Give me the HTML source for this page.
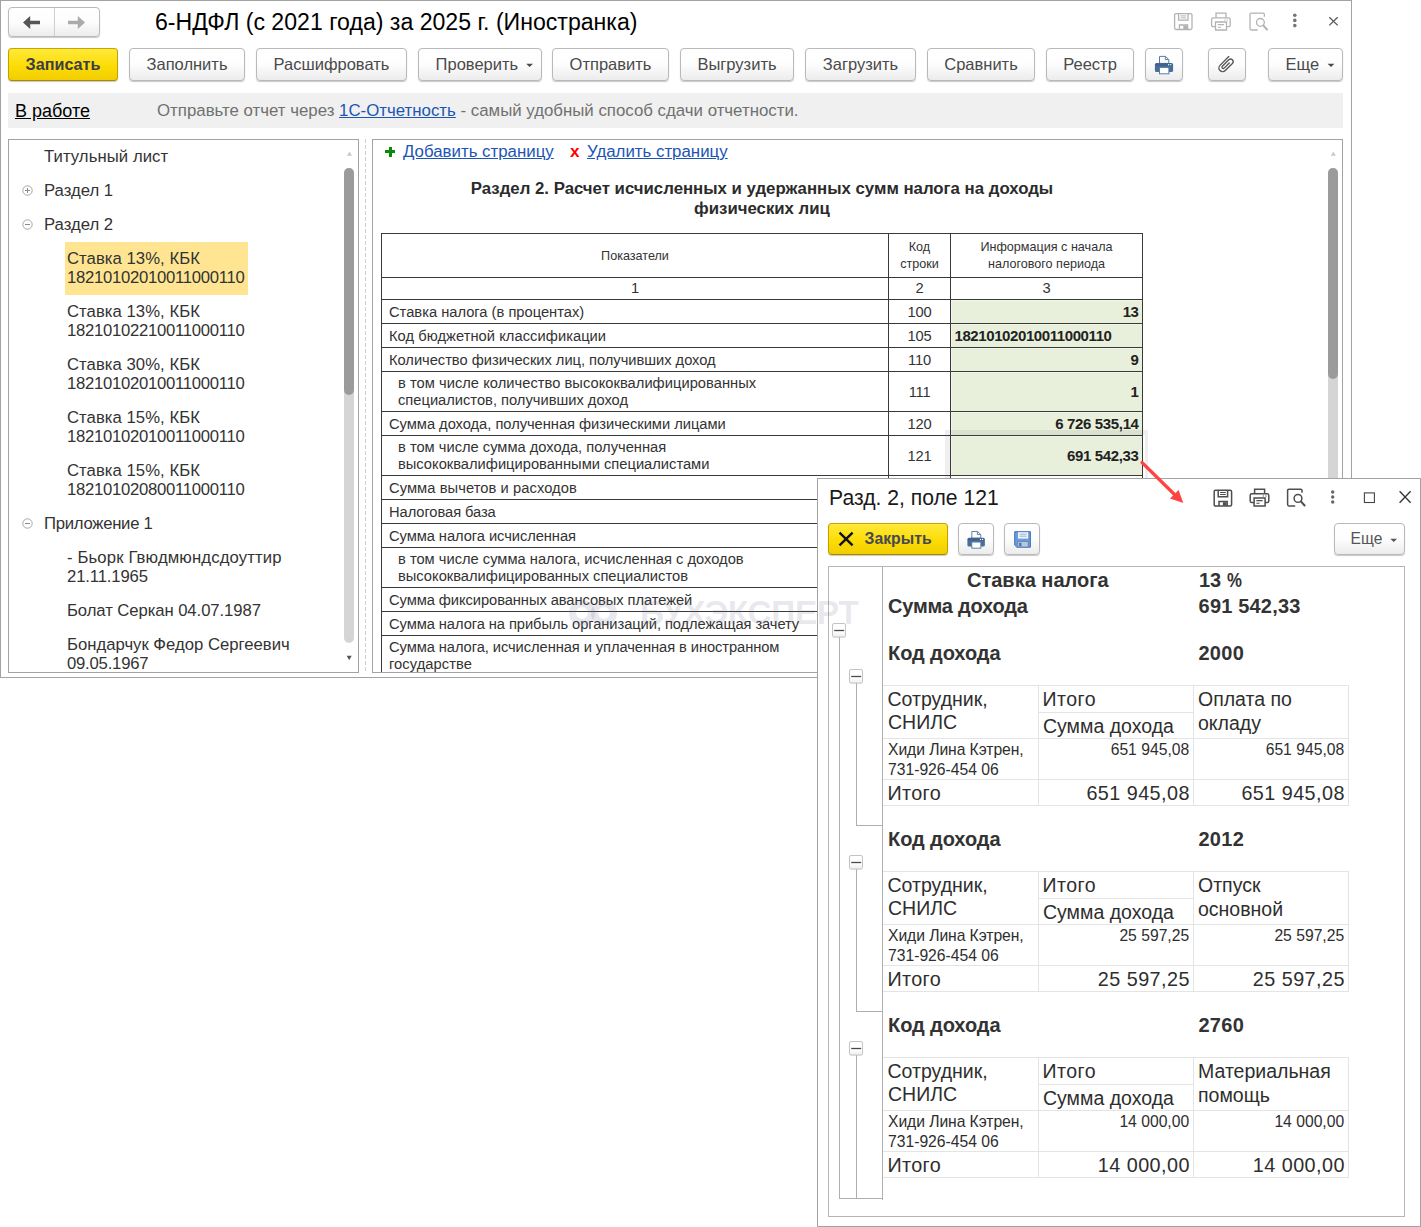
<!DOCTYPE html>
<html lang="ru"><head><meta charset="utf-8"><title>6-НДФЛ</title><style>
*{box-sizing:border-box;margin:0;padding:0}
html,body{width:1421px;height:1227px;overflow:hidden;background:#fff}
body{font-family:"Liberation Sans",sans-serif;font-size:16.5px;color:#333;position:relative}
.a{position:absolute}
.t{position:absolute;white-space:nowrap}
.clip{position:absolute;overflow:hidden}
.btn{position:absolute;border:1px solid #b9b9b9;border-radius:4px;background:linear-gradient(#ffffff 0%,#fdfdfd 50%,#ececec 100%);box-shadow:0 1px 1px rgba(0,0,0,.22)}
.btn.y{background:linear-gradient(#ffe93a 0%,#fcdc05 55%,#f2cd00 100%);border-color:#c4a600 #bfa100 #a58a00 #bfa100}
a.l{color:#1c55b5;text-decoration:underline}
svg{position:absolute;overflow:visible}
</style></head><body>
<!-- main window frame -->
<div class="a" style="left:0px;top:0px;width:1352px;height:678px;background:#fff;border:1px solid #a3a3a3;"></div>
<div class="btn" style="left:8px;top:7px;width:92px;height:30px"></div>
<div class="a" style="left:54px;top:8px;width:1px;height:28px;background:#cfcfcf;"></div>
<svg style="left:0;top:0" width="110" height="40"><path d="M23 22.5 L30.2 16 L30.2 20.8 L40 20.8 L40 24.2 L30.2 24.2 L30.2 29 Z" fill="#555"/><path d="M85 22.5 L77.8 16 L77.8 20.8 L68 20.8 L68 24.2 L77.8 24.2 L77.8 29 Z" fill="#ababab"/></svg>
<div class="t" style="left:155px;top:8.00px;font-size:23.1px;line-height:28px;color:#000;">6-НДФЛ (с 2021 года) за 2025 г. (Иностранка)</div>
<!--ICONS_TOP-->
<div class="btn y" style="left:8px;top:48px;width:110px;height:33px"></div>
<div class="btn" style="left:129px;top:48px;width:116px;height:33px"></div>
<div class="btn" style="left:256px;top:48px;width:151px;height:33px"></div>
<div class="btn" style="left:418px;top:48px;width:124px;height:33px"></div>
<div class="btn" style="left:552px;top:48px;width:117px;height:33px"></div>
<div class="btn" style="left:680px;top:48px;width:114px;height:33px"></div>
<div class="btn" style="left:805px;top:48px;width:111px;height:33px"></div>
<div class="btn" style="left:927px;top:48px;width:108px;height:33px"></div>
<div class="btn" style="left:1046px;top:48px;width:88px;height:33px"></div>
<div class="btn" style="left:1145px;top:48px;width:38px;height:33px"></div>
<div class="btn" style="left:1208px;top:48px;width:38px;height:33px"></div>
<div class="btn" style="left:1268px;top:48px;width:75px;height:33px"></div>
<div class="t" style="left:8px;top:54.39px;font-size:16.2px;line-height:20px;color:#3d3d47;font-weight:bold;width:110px;text-align:center;">Записать</div>
<div class="t" style="left:129px;top:54.28px;font-size:16.5px;line-height:20px;color:#4a4a4a;width:116px;text-align:center;">Заполнить</div>
<div class="t" style="left:256px;top:54.28px;font-size:16.5px;line-height:20px;color:#4a4a4a;width:151px;text-align:center;">Расшифровать</div>
<div class="t" style="left:435.6px;top:54.28px;font-size:16.5px;line-height:20px;color:#4a4a4a;">Проверить</div>
<div class="t" style="left:552px;top:54.28px;font-size:16.5px;line-height:20px;color:#4a4a4a;width:117px;text-align:center;">Отправить</div>
<div class="t" style="left:680px;top:54.28px;font-size:16.5px;line-height:20px;color:#4a4a4a;width:114px;text-align:center;">Выгрузить</div>
<div class="t" style="left:805px;top:54.28px;font-size:16.5px;line-height:20px;color:#4a4a4a;width:111px;text-align:center;">Загрузить</div>
<div class="t" style="left:927px;top:54.28px;font-size:16.5px;line-height:20px;color:#4a4a4a;width:108px;text-align:center;">Сравнить</div>
<div class="t" style="left:1046px;top:54.28px;font-size:16.5px;line-height:20px;color:#4a4a4a;width:88px;text-align:center;">Реестр</div>
<div class="t" style="left:1285.6px;top:54.28px;font-size:16.5px;line-height:20px;color:#4a4a4a;">Еще</div>
<svg style="left:0;top:0" width="1" height="1"><path d="M526.2 63.7 L533.0 63.7 L529.6 67.10000000000001 Z" fill="#4a4a4a"/></svg>
<svg style="left:0;top:0" width="1" height="1"><path d="M1327.6 63.7 L1334.4 63.7 L1331 67.10000000000001 Z" fill="#4a4a4a"/></svg>
<svg style="left:0;top:0" width="1421" height="60">
<g transform="translate(1174,13)" fill="none" stroke="#b3b3b3" stroke-width="1.3"><path d="M2 0.6 H16.5 Q18 0.6 18 2.1 V15 Q18 16.5 16.5 16.5 H2 Q0.6 16.5 0.6 15 V2.1 Q0.6 0.6 2 0.6 Z"/><path d="M4.6 0.6 V7.2 H14 V0.6"/><path d="M6.5 2.9 H12.2 M6.5 4.9 H12.2" stroke-width="1"/><path d="M5.4 16.5 V12 H13.6 V16.5"/><rect x="9.3" y="12.6" width="3.7" height="3.5" fill="#b3b3b3" stroke="none"/></g>
<g transform="translate(1211,12.6)" fill="none" stroke="#b3b3b3" stroke-width="1.3"><path d="M5 5.2 V0.6 H15 V5.2"/><path d="M4.5 14 H2.2 Q0.6 14 0.6 12.4 V6.8 Q0.6 5.2 2.2 5.2 H17.6 Q19.2 5.2 19.2 6.8 V12.4 Q19.2 14 17.6 14 H15.5"/><path d="M4.5 9.4 H15.5 V17.4 H4.5 Z"/><path d="M6.8 12 H13 M6.8 14.6 H10" stroke-width="1.1"/><path d="M13.2 7.4 H14.4 M15.8 7.4 H17" stroke-width="1.1"/></g>
<g transform="translate(1249.4,12.6)" fill="none" stroke="#b3b3b3" stroke-width="1.3"><path d="M15 4.2 V2 Q15 0.6 13.6 0.6 H2 Q0.6 0.6 0.6 2 V16 Q0.6 17.4 2 17.4 H8.2"/><circle cx="11" cy="9.8" r="3.9"/><path d="M13.9 12.8 L17.6 16.9" stroke-width="2" stroke-linecap="round"/></g>
<circle cx="1294.8" cy="15.3" r="1.8" fill="#757575"/><circle cx="1294.8" cy="20.4" r="1.8" fill="#757575"/><circle cx="1294.8" cy="25.6" r="1.8" fill="#757575"/>
<path d="M1329.3 17.2 L1337.7 25.4 M1337.7 17.2 L1329.3 25.4" stroke="#585858" stroke-width="1.3" fill="none"/>
<g transform="translate(1154.9,63)"><path d="M4.6 0.4 V-6.6 H10.6 L13.9 -3.4 V0.4 Z" fill="#fff" stroke="#5b7ba6" stroke-width="1"/><path d="M10.4 -6.4 V-3.4 H13.7" fill="none" stroke="#5b7ba6" stroke-width="1"/><rect x="0" y="0" width="18.2" height="9" rx="1.6" fill="#4a6d99"/><rect x="0.6" y="0.5" width="17" height="2.4" rx="1" fill="#3f628f"/><rect x="4.6" y="4.4" width="9.4" height="6.4" fill="#fff" stroke="#5b7ba6" stroke-width="1"/><rect x="13.1" y="1.1" width="1.2" height="1.2" fill="#fff"/><rect x="15.2" y="1.1" width="1.2" height="1.2" fill="#fff"/></g>
<g transform="translate(1226.3,64.3) rotate(45)" fill="none" stroke="#555" stroke-width="1.35" stroke-linecap="round"><path d="M-3.7 -7.2 L-3.7 5.2 A3.7 3.7 0 0 0 3.7 5.2 L3.7 -4.9 A2.55 2.55 0 0 0 -1.4 -4.9 L-1.4 4.2 A1.3 1.3 0 0 0 1.2 4.2 L1.2 -3.0"/></g>
</svg>
<div class="a" style="left:8px;top:93px;width:1335px;height:35px;background:#f0f0f0;"></div>
<div class="t" style="left:15px;top:100.26px;font-size:18px;line-height:22px;color:#000;"><span style="text-decoration:underline">В работе</span></div>
<div class="t" style="left:157px;top:101.17px;font-size:16.83px;line-height:20px;color:#707070;">Отправьте отчет через <a class="l">1С-Отчетность</a> - самый удобный способ сдачи отчетности.</div>
<div class="a" style="left:8px;top:139px;width:351px;height:534px;background:#fff;border:1px solid #a3a3a3;"></div>
<div class="clip" style="left:9px;top:140px;width:349px;height:532px">
<div class="a" style="left:56px;top:102px;width:183px;height:53px;background:#ffe591;"></div>
<div class="t" style="left:35px;top:6.71px;font-size:16.7px;line-height:19px;color:#333;letter-spacing:0.07px;">Титульный лист</div>
<div class="t" style="left:35px;top:40.71px;font-size:16.7px;line-height:19px;color:#333;">Раздел 1</div>
<div class="t" style="left:35px;top:74.71px;font-size:16.7px;line-height:19px;color:#333;">Раздел 2</div>
<div class="t" style="left:58px;top:108.71px;font-size:16.7px;line-height:19px;color:#333;letter-spacing:0.04px;">Ставка 13%, КБК</div>
<div class="t" style="left:58px;top:127.71px;font-size:16.7px;line-height:19px;color:#333;letter-spacing:-0.28px;">18210102010011000110</div>
<div class="t" style="left:58px;top:161.71px;font-size:16.7px;line-height:19px;color:#333;letter-spacing:0.04px;">Ставка 13%, КБК</div>
<div class="t" style="left:58px;top:180.71px;font-size:16.7px;line-height:19px;color:#333;letter-spacing:-0.28px;">18210102210011000110</div>
<div class="t" style="left:58px;top:214.71px;font-size:16.7px;line-height:19px;color:#333;letter-spacing:0.04px;">Ставка 30%, КБК</div>
<div class="t" style="left:58px;top:233.71px;font-size:16.7px;line-height:19px;color:#333;letter-spacing:-0.28px;">18210102010011000110</div>
<div class="t" style="left:58px;top:267.71px;font-size:16.7px;line-height:19px;color:#333;letter-spacing:0.04px;">Ставка 15%, КБК</div>
<div class="t" style="left:58px;top:286.71px;font-size:16.7px;line-height:19px;color:#333;letter-spacing:-0.28px;">18210102010011000110</div>
<div class="t" style="left:58px;top:320.71px;font-size:16.7px;line-height:19px;color:#333;letter-spacing:0.04px;">Ставка 15%, КБК</div>
<div class="t" style="left:58px;top:339.71px;font-size:16.7px;line-height:19px;color:#333;letter-spacing:-0.28px;">18210102080011000110</div>
<div class="t" style="left:35px;top:373.71px;font-size:16.7px;line-height:19px;color:#333;letter-spacing:-0.27px;">Приложение 1</div>
<div class="t" style="left:58px;top:407.71px;font-size:16.7px;line-height:19px;color:#333;letter-spacing:0.13px;">- Бьорк Гвюдмюндсдоуттир</div>
<div class="t" style="left:58px;top:426.71px;font-size:16.7px;line-height:19px;color:#333;letter-spacing:-0.14px;">21.11.1965</div>
<div class="t" style="left:58px;top:460.71px;font-size:16.7px;line-height:19px;color:#333;letter-spacing:-0.08px;">Болат Серкан 04.07.1987</div>
<div class="t" style="left:58px;top:494.71px;font-size:16.7px;line-height:19px;color:#333;">Бондарчук Федор Сергеевич</div>
<div class="t" style="left:58px;top:513.71px;font-size:16.7px;line-height:19px;color:#333;letter-spacing:-0.22px;">09.05.1967</div>
<svg style="left:0;top:0" width="60" height="540">
<circle cx="18.5" cy="50.5" r="4.7" fill="#fff" stroke="#a6a6a6" stroke-width="1"/>
<path d="M16.0 50.5 H21.0" stroke="#8a8a8a" stroke-width="1"/>
<path d="M18.5 48.0 V53.0" stroke="#8a8a8a" stroke-width="1"/>
<circle cx="18.5" cy="84.5" r="4.7" fill="#fff" stroke="#a6a6a6" stroke-width="1"/>
<path d="M16.0 84.5 H21.0" stroke="#8a8a8a" stroke-width="1"/>
<circle cx="18.5" cy="383.5" r="4.7" fill="#fff" stroke="#a6a6a6" stroke-width="1"/>
<path d="M16.0 383.5 H21.0" stroke="#8a8a8a" stroke-width="1"/>
<path d="M337.9 15.800000000000011 L343.1 15.800000000000011 L340.5 11.400000000000006 Z" fill="#c9c9c9"/>
<path d="M337.7 515.8 L342.7 515.8 L340.2 520.3 Z" fill="#555"/>
</svg>
<div class="a" style="left:335px;top:28px;width:10px;height:475px;background:#d5d5d5;border-radius:5px;"></div>
<div class="a" style="left:335px;top:28px;width:10px;height:227px;background:#9b9b9b;border-radius:5px;"></div>
</div>
<div class="a" style="left:365px;top:139px;width:1px;height:534px;background:repeating-linear-gradient(to bottom,#cfcfcf 0,#cfcfcf 4px,transparent 4px,transparent 6px);"></div>
<div class="a" style="left:372px;top:139px;width:971px;height:534px;background:#fff;border:1px solid #a3a3a3;"></div>
<div class="clip" style="left:373px;top:140px;width:969px;height:532px">
<div class="a" style="left:12px;top:10px;width:10px;height:3px;background:#0a8a0a;"></div>
<div class="a" style="left:15.5px;top:6.5px;width:3px;height:10px;background:#0a8a0a;"></div>
<div class="t" style="left:30px;top:2.16px;font-size:16.85px;line-height:20px;color:#333;"><a class="l">Добавить страницу</a></div>
<div class="t" style="left:197px;top:1.04px;font-size:17.2px;line-height:20px;color:#f00;font-weight:bold;">x</div>
<div class="t" style="left:214px;top:2.16px;font-size:16.85px;line-height:20px;color:#333;"><a class="l">Удалить страницу</a></div>
<div class="t" style="left:8px;top:39.18px;font-size:16.8px;line-height:20px;color:#2b2b2b;font-weight:bold;width:762px;text-align:center;">Раздел 2. Расчет исчисленных и удержанных сумм налога на доходы<br>физических лиц</div>
<div class="a" style="left:578px;top:160px;width:191px;height:23px;background:#f1f6ea;"></div>
<div class="a" style="left:579px;top:161px;width:190px;height:22px;background:#e8f0dc;"></div>
<div class="a" style="left:578px;top:184px;width:191px;height:23px;background:#f1f6ea;"></div>
<div class="a" style="left:579px;top:185px;width:190px;height:22px;background:#e8f0dc;"></div>
<div class="a" style="left:578px;top:208px;width:191px;height:23px;background:#f1f6ea;"></div>
<div class="a" style="left:579px;top:209px;width:190px;height:22px;background:#e8f0dc;"></div>
<div class="a" style="left:578px;top:232px;width:191px;height:39px;background:#f1f6ea;"></div>
<div class="a" style="left:579px;top:233px;width:190px;height:38px;background:#e8f0dc;"></div>
<div class="a" style="left:578px;top:272px;width:191px;height:23px;background:#f1f6ea;"></div>
<div class="a" style="left:579px;top:273px;width:190px;height:22px;background:#e8f0dc;"></div>
<div class="a" style="left:578px;top:296px;width:191px;height:39px;background:#f1f6ea;"></div>
<div class="a" style="left:579px;top:297px;width:190px;height:38px;background:#e8f0dc;"></div>
<div class="a" style="left:572px;top:290px;width:5px;height:50px;background:rgba(110,110,110,.11);"></div>
<div class="a" style="left:577px;top:290px;width:198px;height:5px;background:rgba(110,110,110,.11);"></div>
<div class="a" style="left:772px;top:295px;width:3px;height:45px;background:rgba(110,110,110,.11);"></div>
<div class="a" style="left:8px;top:93px;width:762px;height:1px;background:#3a3a3a;"></div>
<div class="a" style="left:8px;top:137px;width:762px;height:1px;background:#3a3a3a;"></div>
<div class="a" style="left:8px;top:159px;width:762px;height:1px;background:#3a3a3a;"></div>
<div class="a" style="left:8px;top:183px;width:762px;height:1px;background:#3a3a3a;"></div>
<div class="a" style="left:8px;top:207px;width:762px;height:1px;background:#3a3a3a;"></div>
<div class="a" style="left:8px;top:231px;width:762px;height:1px;background:#3a3a3a;"></div>
<div class="a" style="left:8px;top:271px;width:762px;height:1px;background:#3a3a3a;"></div>
<div class="a" style="left:8px;top:295px;width:762px;height:1px;background:#3a3a3a;"></div>
<div class="a" style="left:8px;top:335px;width:762px;height:1px;background:#3a3a3a;"></div>
<div class="a" style="left:8px;top:359px;width:762px;height:1px;background:#3a3a3a;"></div>
<div class="a" style="left:8px;top:383px;width:762px;height:1px;background:#3a3a3a;"></div>
<div class="a" style="left:8px;top:407px;width:762px;height:1px;background:#3a3a3a;"></div>
<div class="a" style="left:8px;top:447px;width:762px;height:1px;background:#3a3a3a;"></div>
<div class="a" style="left:8px;top:471px;width:762px;height:1px;background:#3a3a3a;"></div>
<div class="a" style="left:8px;top:495px;width:762px;height:1px;background:#3a3a3a;"></div>
<div class="a" style="left:8px;top:535px;width:762px;height:1px;background:#3a3a3a;"></div>
<div class="a" style="left:8px;top:93px;width:1px;height:443px;background:#3a3a3a;"></div>
<div class="a" style="left:515px;top:93px;width:1px;height:443px;background:#3a3a3a;"></div>
<div class="a" style="left:577px;top:93px;width:1px;height:443px;background:#3a3a3a;"></div>
<div class="a" style="left:769px;top:93px;width:1px;height:443px;background:#3a3a3a;"></div>
<div class="t" style="left:8px;top:108.63px;font-size:12.6px;line-height:15px;color:#333;width:508px;text-align:center;">Показатели</div>
<div class="t" style="left:515px;top:99.13px;font-size:12.6px;line-height:17px;color:#333;width:63px;text-align:center;">Код<br>строки</div>
<div class="t" style="left:577px;top:99.13px;font-size:12.6px;line-height:17px;color:#333;width:193px;text-align:center;">Информация с начала<br>налогового периода</div>
<div class="t" style="left:8px;top:140.41px;font-size:14.7px;line-height:17px;color:#333;width:508px;text-align:center;">1</div>
<div class="t" style="left:515px;top:140.41px;font-size:14.7px;line-height:17px;color:#333;width:63px;text-align:center;">2</div>
<div class="t" style="left:577px;top:140.41px;font-size:14.7px;line-height:17px;color:#333;width:193px;text-align:center;">3</div>
<div class="t" style="left:16px;top:164.41px;font-size:14.7px;line-height:17px;color:#333;">Ставка налога (в процентах)</div>
<div class="t" style="left:515px;top:164.41px;font-size:14.7px;line-height:17px;color:#333;width:63px;text-align:center;letter-spacing:-0.2px;">100</div>
<div class="t" style="left:577px;top:162.90px;font-size:15px;line-height:17px;color:#222;font-weight:bold;width:188.6px;text-align:right;letter-spacing:-0.36px;">13</div>
<div class="t" style="left:16px;top:188.41px;font-size:14.7px;line-height:17px;color:#333;letter-spacing:0.05px;">Код бюджетной классификации</div>
<div class="t" style="left:515px;top:188.41px;font-size:14.7px;line-height:17px;color:#333;width:63px;text-align:center;letter-spacing:-0.2px;">105</div>
<div class="t" style="left:581.5px;top:186.90px;font-size:15px;line-height:17px;color:#222;font-weight:bold;letter-spacing:-0.41px;">18210102010011000110</div>
<div class="t" style="left:16px;top:212.41px;font-size:14.7px;line-height:17px;color:#333;letter-spacing:-0.025px;">Количество физических лиц, получивших доход</div>
<div class="t" style="left:515px;top:212.41px;font-size:14.7px;line-height:17px;color:#333;width:63px;text-align:center;letter-spacing:-0.2px;">110</div>
<div class="t" style="left:577px;top:210.90px;font-size:15px;line-height:17px;color:#222;font-weight:bold;width:188.6px;text-align:right;letter-spacing:-0.36px;">9</div>
<div class="t" style="left:25px;top:235.41px;font-size:14.7px;line-height:17px;color:#333;letter-spacing:0.03px;">в том числе количество высококвалифицированных</div>
<div class="t" style="left:25px;top:252.41px;font-size:14.7px;line-height:17px;color:#333;">специалистов, получивших доход</div>
<div class="t" style="left:515px;top:244.41px;font-size:14.7px;line-height:17px;color:#333;width:63px;text-align:center;letter-spacing:-0.2px;">111</div>
<div class="t" style="left:577px;top:242.90px;font-size:15px;line-height:17px;color:#222;font-weight:bold;width:188.6px;text-align:right;letter-spacing:-0.36px;">1</div>
<div class="t" style="left:16px;top:276.41px;font-size:14.7px;line-height:17px;color:#333;letter-spacing:-0.025px;">Сумма дохода, полученная физическими лицами</div>
<div class="t" style="left:515px;top:276.41px;font-size:14.7px;line-height:17px;color:#333;width:63px;text-align:center;letter-spacing:-0.2px;">120</div>
<div class="t" style="left:577px;top:274.90px;font-size:15px;line-height:17px;color:#222;font-weight:bold;width:188.6px;text-align:right;letter-spacing:-0.36px;">6 726 535,14</div>
<div class="t" style="left:25px;top:299.41px;font-size:14.7px;line-height:17px;color:#333;">в том числе сумма дохода, полученная</div>
<div class="t" style="left:25px;top:316.41px;font-size:14.7px;line-height:17px;color:#333;">высококвалифицированными специалистами</div>
<div class="t" style="left:515px;top:308.41px;font-size:14.7px;line-height:17px;color:#333;width:63px;text-align:center;letter-spacing:-0.2px;">121</div>
<div class="t" style="left:577px;top:306.90px;font-size:15px;line-height:17px;color:#222;font-weight:bold;width:188.6px;text-align:right;letter-spacing:-0.36px;">691 542,33</div>
<div class="t" style="left:16px;top:340.41px;font-size:14.7px;line-height:17px;color:#333;letter-spacing:0.075px;">Сумма вычетов и расходов</div>
<div class="t" style="left:16px;top:364.41px;font-size:14.7px;line-height:17px;color:#333;letter-spacing:-0.07px;">Налоговая база</div>
<div class="t" style="left:16px;top:388.41px;font-size:14.7px;line-height:17px;color:#333;letter-spacing:-0.06px;">Сумма налога исчисленная</div>
<div class="t" style="left:25px;top:411.41px;font-size:14.7px;line-height:17px;color:#333;">в том числе сумма налога, исчисленная с доходов</div>
<div class="t" style="left:25px;top:428.41px;font-size:14.7px;line-height:17px;color:#333;">высококвалифицированных специалистов</div>
<div class="t" style="left:16px;top:452.41px;font-size:14.7px;line-height:17px;color:#333;letter-spacing:-0.066px;">Сумма фиксированных авансовых платежей</div>
<div class="t" style="left:16px;top:476.41px;font-size:14.7px;line-height:17px;color:#333;letter-spacing:-0.067px;">Сумма налога на прибыль организаций, подлежащая зачету</div>
<div class="t" style="left:16px;top:499.41px;font-size:14.7px;line-height:17px;color:#333;letter-spacing:-0.07px;">Сумма налога, исчисленная и уплаченная в иностранном</div>
<div class="t" style="left:16px;top:516.41px;font-size:14.7px;line-height:17px;color:#333;letter-spacing:0.08px;">государстве</div>
<!--WM removed-->
<div class="a" style="left:955px;top:28px;width:10px;height:520px;background:#d5d5d5;border-radius:5px;"></div>
<div class="a" style="left:955px;top:28px;width:10px;height:211px;background:#9b9b9b;border-radius:5px;"></div>
<svg style="left:0;top:0" width="1" height="1"><path d="M957.7 15.8 L962.9 15.8 L960.3 11.4 Z" fill="#c9c9c9"/></svg>
</div>
<div class="a" style="left:817px;top:478px;width:604px;height:749px;background:#fff;border:1px solid #a3a3a3;"></div>
<div class="t" style="left:829px;top:484.67px;font-size:21.15px;line-height:26px;color:#1a1a1a;">Разд. 2, поле 121</div>
<div class="btn y" style="left:828px;top:523px;width:120px;height:32px"></div>
<div class="btn" style="left:958px;top:523px;width:36px;height:32px"></div>
<div class="btn" style="left:1004px;top:523px;width:36px;height:32px"></div>
<div class="btn" style="left:1334px;top:523px;width:71px;height:32px"></div>
<div class="t" style="left:864.6px;top:528.54px;font-size:15.75px;line-height:20px;color:#454955;font-weight:bold;">Закрыть</div>
<div class="t" style="left:1350.6px;top:528.59px;font-size:15.6px;line-height:20px;color:#555;">Еще</div>
<svg style="left:0;top:0" width="1421" height="560">
<g transform="translate(1213.6,489.6)" fill="none" stroke="#4e4e4e" stroke-width="1.5"><path d="M2 0.6 H16.5 Q18 0.6 18 2.1 V15 Q18 16.5 16.5 16.5 H2 Q0.6 16.5 0.6 15 V2.1 Q0.6 0.6 2 0.6 Z"/><path d="M4.6 0.6 V7.2 H14 V0.6"/><path d="M6.5 2.9 H12.2 M6.5 4.9 H12.2" stroke-width="1"/><path d="M5.4 16.5 V12 H13.6 V16.5"/><rect x="9.3" y="12.6" width="3.7" height="3.5" fill="#4e4e4e" stroke="none"/></g>
<g transform="translate(1249.6,488.6)" fill="none" stroke="#4e4e4e" stroke-width="1.5"><path d="M5 5.2 V0.6 H15 V5.2"/><path d="M4.5 14 H2.2 Q0.6 14 0.6 12.4 V6.8 Q0.6 5.2 2.2 5.2 H17.6 Q19.2 5.2 19.2 6.8 V12.4 Q19.2 14 17.6 14 H15.5"/><path d="M4.5 9.4 H15.5 V17.4 H4.5 Z"/><path d="M6.8 12 H13 M6.8 14.6 H10" stroke-width="1.1"/><path d="M13.2 7.4 H14.4 M15.8 7.4 H17" stroke-width="1.1"/></g>
<g transform="translate(1287,488.6)" fill="none" stroke="#4e4e4e" stroke-width="1.5"><path d="M15 4.2 V2 Q15 0.6 13.6 0.6 H2 Q0.6 0.6 0.6 2 V16 Q0.6 17.4 2 17.4 H8.2"/><circle cx="11" cy="9.8" r="3.9"/><path d="M13.9 12.8 L17.6 16.9" stroke-width="2" stroke-linecap="round"/></g>
<circle cx="1332.7" cy="492" r="1.7" fill="#666"/><circle cx="1332.7" cy="497" r="1.7" fill="#666"/><circle cx="1332.7" cy="502" r="1.7" fill="#666"/>
<rect x="1364.4" y="492.9" width="10" height="9.6" fill="none" stroke="#444" stroke-width="1.1"/>
<path d="M1399.6 491.3 L1410.6 502.8 M1410.6 491.3 L1399.6 502.8" stroke="#333" stroke-width="1.3" fill="none"/>
<path d="M839.5 532.6 L852.6 545.3 M852.6 532.6 L839.5 545.3" stroke="#111" stroke-width="2.4" fill="none"/>
<g transform="scale(0.96) translate(1007.7083333333334,560.2083333333333)"><path d="M4.6 0.4 V-6.6 H10.6 L13.9 -3.4 V0.4 Z" fill="#fff" stroke="#5b7ba6" stroke-width="1"/><path d="M10.4 -6.4 V-3.4 H13.7" fill="none" stroke="#5b7ba6" stroke-width="1"/><rect x="0" y="0" width="18.2" height="9" rx="1.6" fill="#4a6d99"/><rect x="0.6" y="0.5" width="17" height="2.4" rx="1" fill="#3f628f"/><rect x="4.6" y="4.4" width="9.4" height="6.4" fill="#fff" stroke="#5b7ba6" stroke-width="1"/><rect x="13.1" y="1.1" width="1.2" height="1.2" fill="#fff"/><rect x="15.2" y="1.1" width="1.2" height="1.2" fill="#fff"/></g>
<g transform="translate(1014.2,531.2)"><path d="M0.5 0.5 H16.2 V16 H2.6 L0.5 13.9 Z" fill="#6a9bd8" stroke="#3f73b5" stroke-width="1"/><rect x="3.8" y="1" width="10.2" height="6.4" fill="#eef3fa"/><path d="M5.4 3 H12.4 M5.4 5 H12.4" stroke="#9db6d6" stroke-width="1"/><rect x="3.6" y="10.4" width="10.4" height="5.4" fill="#b9c7d8" stroke="#5d83b5" stroke-width="0.8"/><rect x="5" y="11.6" width="2.2" height="3.6" fill="#3f73b5"/></g>
</svg>
<svg style="left:0;top:0" width="1" height="1"><path d="M1390.3 538.7 L1397.1000000000001 538.7 L1393.7 542.1 Z" fill="#555"/></svg>
<div class="a" style="left:828px;top:566px;width:577px;height:651px;background:#fff;border:1px solid #b5b5b5;"></div>
<div class="a" style="left:882px;top:567px;width:1px;height:633px;background:#b0b0b0;"></div>
<div class="a" style="left:839px;top:636px;width:1px;height:562px;background:#b0b0b0;"></div>
<div class="a" style="left:839px;top:1198px;width:44px;height:1px;background:#b0b0b0;"></div>
<svg style="left:0;top:0" width="1421" height="1227" shape-rendering="crispEdges">
<defs><linearGradient id="mbg" x1="0" y1="0" x2="0" y2="1"><stop offset="0" stop-color="#fff"/><stop offset="0.6" stop-color="#fff"/><stop offset="1" stop-color="#ececec"/></linearGradient></defs>
<rect x="832.5" y="623.5" width="13" height="13.6" rx="1.6" fill="url(#mbg)" stroke="#c2c2c2" stroke-width="1" shape-rendering="auto"/><path d="M834.2 630.5 H844.2" stroke="#4a4a4a" stroke-width="1.3" shape-rendering="auto"/>
<path d="M856.5 683 V825.5 H883" fill="none" stroke="#aeaeae" stroke-width="1"/>
<rect x="849.5" y="669.5" width="13" height="13.6" rx="1.6" fill="url(#mbg)" stroke="#c2c2c2" stroke-width="1" shape-rendering="auto"/><path d="M851.2 676.5 H861.2" stroke="#4a4a4a" stroke-width="1.3" shape-rendering="auto"/>
<path d="M856.5 869 V1011.5 H883" fill="none" stroke="#aeaeae" stroke-width="1"/>
<rect x="849.5" y="855.5" width="13" height="13.6" rx="1.6" fill="url(#mbg)" stroke="#c2c2c2" stroke-width="1" shape-rendering="auto"/><path d="M851.2 862.5 H861.2" stroke="#4a4a4a" stroke-width="1.3" shape-rendering="auto"/>
<path d="M856.5 1055 V1198.5 H883" fill="none" stroke="#aeaeae" stroke-width="1"/>
<rect x="849.5" y="1041.5" width="13" height="13.6" rx="1.6" fill="url(#mbg)" stroke="#c2c2c2" stroke-width="1" shape-rendering="auto"/><path d="M851.2 1048.5 H861.2" stroke="#4a4a4a" stroke-width="1.3" shape-rendering="auto"/>
</svg>
<div class="t" style="left:967px;top:568.07px;font-size:20px;line-height:24px;color:#333;font-weight:bold;">Ставка налога</div>
<div class="t" style="left:1199px;top:568.07px;font-size:20px;line-height:24px;color:#333;font-weight:bold;">13 <span style="display:inline-block;transform:scaleX(.84);transform-origin:0 0">%</span></div>
<div class="t" style="left:888px;top:594.07px;font-size:20px;line-height:24px;color:#333;font-weight:bold;letter-spacing:-0.2px;">Сумма дохода</div>
<div class="t" style="left:1198.6px;top:594.07px;font-size:20px;line-height:24px;color:#333;font-weight:bold;letter-spacing:0.18px;">691 542,33</div>
<div class="t" style="left:888px;top:641.07px;font-size:20px;line-height:24px;color:#333;font-weight:bold;letter-spacing:-0.08px;">Код дохода</div>
<div class="t" style="left:1198.4px;top:641.07px;font-size:20px;line-height:24px;color:#333;font-weight:bold;letter-spacing:0.3px;">2000</div>
<div class="a" style="left:883px;top:685px;width:466px;height:1px;background:#e4e4e4;"></div>
<div class="a" style="left:883px;top:738px;width:466px;height:1px;background:#e4e4e4;"></div>
<div class="a" style="left:883px;top:779px;width:466px;height:1px;background:#e4e4e4;"></div>
<div class="a" style="left:883px;top:805px;width:466px;height:1px;background:#e4e4e4;"></div>
<div class="a" style="left:1038px;top:712px;width:155px;height:1px;background:#e4e4e4;"></div>
<div class="a" style="left:1038px;top:686px;width:1px;height:120px;background:#e4e4e4;"></div>
<div class="a" style="left:1193px;top:686px;width:1px;height:120px;background:#e4e4e4;"></div>
<div class="a" style="left:1348px;top:686px;width:1px;height:120px;background:#e4e4e4;"></div>
<div class="t" style="left:887.5px;top:687.74px;font-size:19.5px;line-height:23px;color:#2e2e2e;">Сотрудник,</div>
<div class="t" style="left:888px;top:710.74px;font-size:19.5px;line-height:23px;color:#2e2e2e;">СНИЛС</div>
<div class="t" style="left:1042.4px;top:687.74px;font-size:19.5px;line-height:23px;color:#2e2e2e;letter-spacing:0.55px;">Итого</div>
<div class="t" style="left:1043px;top:714.74px;font-size:19.5px;line-height:23px;color:#2e2e2e;">Сумма дохода</div>
<div class="t" style="left:1198px;top:687.74px;font-size:19.5px;line-height:23px;color:#2e2e2e;">Оплата по</div>
<div class="t" style="left:1198px;top:711.74px;font-size:19.5px;line-height:23px;color:#2e2e2e;">окладу</div>
<div class="t" style="left:888px;top:740.06px;font-size:15.7px;line-height:19px;color:#2e2e2e;letter-spacing:-0.07px;">Хиди Лина Кэтрен,</div>
<div class="t" style="left:888px;top:760.06px;font-size:15.7px;line-height:19px;color:#2e2e2e;">731-926-454 06</div>
<div class="t" style="left:1038px;top:740.06px;font-size:15.7px;line-height:19px;color:#2e2e2e;width:151.2px;text-align:right;">651 945,08</div>
<div class="t" style="left:1193px;top:740.06px;font-size:15.7px;line-height:19px;color:#2e2e2e;width:151.2px;text-align:right;">651 945,08</div>
<div class="t" style="left:887.5px;top:781.64px;font-size:19.8px;line-height:23px;color:#2e2e2e;letter-spacing:0.35px;">Итого</div>
<div class="t" style="left:1038px;top:781.64px;font-size:19.8px;line-height:23px;color:#2e2e2e;width:151.9px;text-align:right;letter-spacing:0.45px;">651 945,08</div>
<div class="t" style="left:1193px;top:781.64px;font-size:19.8px;line-height:23px;color:#2e2e2e;width:151.9px;text-align:right;letter-spacing:0.45px;">651 945,08</div>
<div class="t" style="left:888px;top:827.07px;font-size:20px;line-height:24px;color:#333;font-weight:bold;letter-spacing:-0.08px;">Код дохода</div>
<div class="t" style="left:1198.4px;top:827.07px;font-size:20px;line-height:24px;color:#333;font-weight:bold;letter-spacing:0.3px;">2012</div>
<div class="a" style="left:883px;top:871px;width:466px;height:1px;background:#e4e4e4;"></div>
<div class="a" style="left:883px;top:924px;width:466px;height:1px;background:#e4e4e4;"></div>
<div class="a" style="left:883px;top:965px;width:466px;height:1px;background:#e4e4e4;"></div>
<div class="a" style="left:883px;top:991px;width:466px;height:1px;background:#e4e4e4;"></div>
<div class="a" style="left:1038px;top:898px;width:155px;height:1px;background:#e4e4e4;"></div>
<div class="a" style="left:1038px;top:872px;width:1px;height:120px;background:#e4e4e4;"></div>
<div class="a" style="left:1193px;top:872px;width:1px;height:120px;background:#e4e4e4;"></div>
<div class="a" style="left:1348px;top:872px;width:1px;height:120px;background:#e4e4e4;"></div>
<div class="t" style="left:887.5px;top:873.74px;font-size:19.5px;line-height:23px;color:#2e2e2e;">Сотрудник,</div>
<div class="t" style="left:888px;top:896.74px;font-size:19.5px;line-height:23px;color:#2e2e2e;">СНИЛС</div>
<div class="t" style="left:1042.4px;top:873.74px;font-size:19.5px;line-height:23px;color:#2e2e2e;letter-spacing:0.55px;">Итого</div>
<div class="t" style="left:1043px;top:900.74px;font-size:19.5px;line-height:23px;color:#2e2e2e;">Сумма дохода</div>
<div class="t" style="left:1198px;top:873.74px;font-size:19.5px;line-height:23px;color:#2e2e2e;">Отпуск</div>
<div class="t" style="left:1198px;top:897.74px;font-size:19.5px;line-height:23px;color:#2e2e2e;">основной</div>
<div class="t" style="left:888px;top:926.06px;font-size:15.7px;line-height:19px;color:#2e2e2e;letter-spacing:-0.07px;">Хиди Лина Кэтрен,</div>
<div class="t" style="left:888px;top:946.06px;font-size:15.7px;line-height:19px;color:#2e2e2e;">731-926-454 06</div>
<div class="t" style="left:1038px;top:926.06px;font-size:15.7px;line-height:19px;color:#2e2e2e;width:151.2px;text-align:right;">25 597,25</div>
<div class="t" style="left:1193px;top:926.06px;font-size:15.7px;line-height:19px;color:#2e2e2e;width:151.2px;text-align:right;">25 597,25</div>
<div class="t" style="left:887.5px;top:967.64px;font-size:19.8px;line-height:23px;color:#2e2e2e;letter-spacing:0.35px;">Итого</div>
<div class="t" style="left:1038px;top:967.64px;font-size:19.8px;line-height:23px;color:#2e2e2e;width:151.9px;text-align:right;letter-spacing:0.45px;">25 597,25</div>
<div class="t" style="left:1193px;top:967.64px;font-size:19.8px;line-height:23px;color:#2e2e2e;width:151.9px;text-align:right;letter-spacing:0.45px;">25 597,25</div>
<div class="t" style="left:888px;top:1013.07px;font-size:20px;line-height:24px;color:#333;font-weight:bold;letter-spacing:-0.08px;">Код дохода</div>
<div class="t" style="left:1198.4px;top:1013.07px;font-size:20px;line-height:24px;color:#333;font-weight:bold;letter-spacing:0.3px;">2760</div>
<div class="a" style="left:883px;top:1057px;width:466px;height:1px;background:#e4e4e4;"></div>
<div class="a" style="left:883px;top:1110px;width:466px;height:1px;background:#e4e4e4;"></div>
<div class="a" style="left:883px;top:1151px;width:466px;height:1px;background:#e4e4e4;"></div>
<div class="a" style="left:883px;top:1177px;width:466px;height:1px;background:#e4e4e4;"></div>
<div class="a" style="left:1038px;top:1084px;width:155px;height:1px;background:#e4e4e4;"></div>
<div class="a" style="left:1038px;top:1058px;width:1px;height:120px;background:#e4e4e4;"></div>
<div class="a" style="left:1193px;top:1058px;width:1px;height:120px;background:#e4e4e4;"></div>
<div class="a" style="left:1348px;top:1058px;width:1px;height:120px;background:#e4e4e4;"></div>
<div class="t" style="left:887.5px;top:1059.74px;font-size:19.5px;line-height:23px;color:#2e2e2e;">Сотрудник,</div>
<div class="t" style="left:888px;top:1082.74px;font-size:19.5px;line-height:23px;color:#2e2e2e;">СНИЛС</div>
<div class="t" style="left:1042.4px;top:1059.74px;font-size:19.5px;line-height:23px;color:#2e2e2e;letter-spacing:0.55px;">Итого</div>
<div class="t" style="left:1043px;top:1086.74px;font-size:19.5px;line-height:23px;color:#2e2e2e;">Сумма дохода</div>
<div class="t" style="left:1198px;top:1059.74px;font-size:19.5px;line-height:23px;color:#2e2e2e;">Материальная</div>
<div class="t" style="left:1198px;top:1083.74px;font-size:19.5px;line-height:23px;color:#2e2e2e;">помощь</div>
<div class="t" style="left:888px;top:1112.06px;font-size:15.7px;line-height:19px;color:#2e2e2e;letter-spacing:-0.07px;">Хиди Лина Кэтрен,</div>
<div class="t" style="left:888px;top:1132.06px;font-size:15.7px;line-height:19px;color:#2e2e2e;">731-926-454 06</div>
<div class="t" style="left:1038px;top:1112.06px;font-size:15.7px;line-height:19px;color:#2e2e2e;width:151.2px;text-align:right;">14 000,00</div>
<div class="t" style="left:1193px;top:1112.06px;font-size:15.7px;line-height:19px;color:#2e2e2e;width:151.2px;text-align:right;">14 000,00</div>
<div class="t" style="left:887.5px;top:1153.64px;font-size:19.8px;line-height:23px;color:#2e2e2e;letter-spacing:0.35px;">Итого</div>
<div class="t" style="left:1038px;top:1153.64px;font-size:19.8px;line-height:23px;color:#2e2e2e;width:151.9px;text-align:right;letter-spacing:0.45px;">14 000,00</div>
<div class="t" style="left:1193px;top:1153.64px;font-size:19.8px;line-height:23px;color:#2e2e2e;width:151.9px;text-align:right;letter-spacing:0.45px;">14 000,00</div>
<svg style="left:0;top:0" width="1421" height="1227"><g fill="none" stroke="rgba(110,110,140,.16)" stroke-width="7"><circle cx="582" cy="613" r="9.5"/><circle cx="604" cy="613" r="9.5"/></g></svg>
<div class="t" style="left:640px;top:594.89px;font-size:33.5px;line-height:36px;color:rgba(110,110,140,.16);font-weight:bold;letter-spacing:-0.4px;">БУХЭКСПЕРТ</div>
<svg style="left:0;top:0" width="1421" height="1227"><line x1="1142" y1="462.5" x2="1176" y2="496" stroke="#ff4343" stroke-width="3.2" stroke-linecap="round"/><path d="M1183.3 503 L1178.6 490 L1170 498.6 Z" fill="#ff4343"/></svg>
</body></html>
